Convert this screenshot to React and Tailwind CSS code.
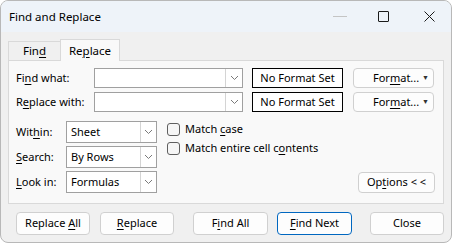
import React from "react";

const font = { fontFamily: '"Noto Sans", "Segoe UI", sans-serif' };

function U({ children }) {
  return <span className="underline underline-offset-[2px] decoration-[1px]">{children}</span>;
}

function Chevron() {
  return (
    <svg width="9" height="6" viewBox="0 0 9 6" className="block">
      <polyline points="1,1 4.5,4.5 8,1" fill="none" stroke="#7a7a7a" strokeWidth="1" />
    </svg>
  );
}

function Combo({ w }) {
  return (
    <div className={`flex h-[20px] border border-[#a0a0a0] bg-white ${w}`}>
      <div className="flex-1" />
      <div className="w-[17px] border-l border-[#d4d4d4] flex items-center justify-center">
        <Chevron />
      </div>
    </div>
  );
}

function Select({ value }) {
  return (
    <div className="flex h-[22px] w-[91px] border border-[#a0a0a0] bg-white">
      <div className="flex-1 flex items-center pl-[4px] text-[11px] text-black">{value}</div>
      <div className="w-[16px] border-l border-[#d4d4d4] flex items-center justify-center">
        <Chevron />
      </div>
    </div>
  );
}

function Btn({ children, w, primary, cls = "" }) {
  return (
    <div
      className={`flex items-center justify-center rounded-[4px] border bg-[#fdfdfd] text-[11px] text-black ${
        primary ? "border-[#0067c0]" : "border-[#d0d0d0]"
      } ${w} ${cls}`}
    >
      {children}
    </div>
  );
}

function Check({ children }) {
  return (
    <div className="flex items-center h-[13px]">
      <div className="w-[13px] h-[13px] rounded-[3px] border border-[#5f5f5f] bg-[#f6f6f6]" />
      <span className="ml-[5px] text-[11px] text-black">{children}</span>
    </div>
  );
}

function FormatBtn() {
  return (
    <Btn w="ml-[10px] w-[81px] h-[20px]">
      <div className="flex items-center w-full pl-[19px] pr-[4px]">
        <span>
          For<U>m</U>at...
        </span>
        <span className="ml-auto text-[7px] text-[#333]">▼</span>
      </div>
    </Btn>
  );
}

export default function App() {
  return (
    <div
      style={font}
      className="w-[452px] h-[243px] bg-[#f0f0f0] border border-[#b8b8b8] rounded-[8px] overflow-hidden flex flex-col text-black"
    >
      {/* Title bar */}
      <div className="h-[31px] bg-[#eef3f9] flex items-center shrink-0 relative">
        <span className="pl-[8px] text-[11.5px]">Find and Replace</span>
        <div className="ml-auto flex items-center h-full">
          <div className="w-[14px] h-[1px] bg-[#c4c4c4] mr-[31px]" />
          <div className="w-[11px] h-[11px] border border-[#1a1a1a] rounded-[1px] mr-[35px]" />
          <svg width="11" height="11" viewBox="0 0 11 11" className="mr-[16px]">
            <line x1="0.5" y1="0.5" x2="10.5" y2="10.5" stroke="#1a1a1a" strokeWidth="1" />
            <line x1="10.5" y1="0.5" x2="0.5" y2="10.5" stroke="#1a1a1a" strokeWidth="1" />
          </svg>
        </div>
      </div>

      {/* Tabs */}
      <div className="ml-[7px] mt-[6px] flex items-end h-[22px] relative z-10">
        <div className="w-[52px] h-[19px] border-t border-l border-[#d9d9d9] bg-[#f0f0f0] flex items-center justify-center text-[11.5px]">
          <span>Fin<U>d</U></span>
        </div>
        <div className="w-[60px] h-[22px] border-t border-l border-r border-[#d9d9d9] bg-[#f9f9f9] flex items-center justify-center text-[11.5px] -mb-[1px]">
          <span>Re<U>p</U>lace</span>
        </div>
      </div>

      {/* Panel */}
      <div className="ml-[7px] w-[436px] h-[144px] border border-[#d9d9d9] bg-[#f9f9f9] flex flex-col pt-[7px] pl-[7px] pr-[8px] text-[11px]">
        <div className="flex items-center h-[20px]">
          <span className="w-[78px]">
            Fi<U>n</U>d what:
          </span>
          <Combo w="w-[149px]" />
          <div className="ml-[9px] w-[91px] h-[20px] border border-black bg-white flex items-center justify-center">
            No Format Set
          </div>
          <FormatBtn />
        </div>
        <div className="flex items-center h-[20px] mt-[4px]">
          <span className="w-[78px]">
            R<U>e</U>place with:
          </span>
          <Combo w="w-[149px]" />
          <div className="ml-[9px] w-[91px] h-[20px] border border-black bg-white flex items-center justify-center">
            No Format Set
          </div>
          <FormatBtn />
        </div>

        <div className="flex mt-[9px]">
          <div className="flex flex-col gap-[3px]">
            <div className="flex items-center">
              <span className="w-[50px]">
                Wit<U>h</U>in:
              </span>
              <Select value="Sheet" />
            </div>
            <div className="flex items-center">
              <span className="w-[50px]">
                <U>S</U>earch:
              </span>
              <Select value="By Rows" />
            </div>
            <div className="flex items-center">
              <span className="w-[50px]">
                <U>L</U>ook in:
              </span>
              <Select value="Formulas" />
            </div>
          </div>
          <div className="ml-[10px] flex flex-col pt-[2px] gap-[6px]">
            <Check>
              Match <U>c</U>ase
            </Check>
            <Check>
              Match entire cell c<U>o</U>ntents
            </Check>
          </div>
          <div className="flex-1 flex items-end justify-end">
            <Btn w="w-[77px] h-[21px]">
              <span>
                Op<U>t</U>ions &lt; &lt;
              </span>
            </Btn>
          </div>
        </div>
      </div>

      {/* Bottom buttons */}
      <div className="flex mt-[8px] ml-[15px] h-[23px]">
        <Btn w="w-[74px] h-[23px]">
          <span>
            Replace <U>A</U>ll
          </span>
        </Btn>
        <Btn w="ml-[10px] w-[74px] h-[23px]">
          <span>
            <U>R</U>eplace
          </span>
        </Btn>
        <Btn w="ml-[19px] w-[75px] h-[23px]">
          <span>
            F<U>i</U>nd All
          </span>
        </Btn>
        <Btn primary w="ml-[9px] w-[75px] h-[23px]">
          <span>
            <U>F</U>ind Next
          </span>
        </Btn>
        <Btn w="ml-[18px] w-[74px] h-[23px]">
          <span>Close</span>
        </Btn>
      </div>
    </div>
  );
}
